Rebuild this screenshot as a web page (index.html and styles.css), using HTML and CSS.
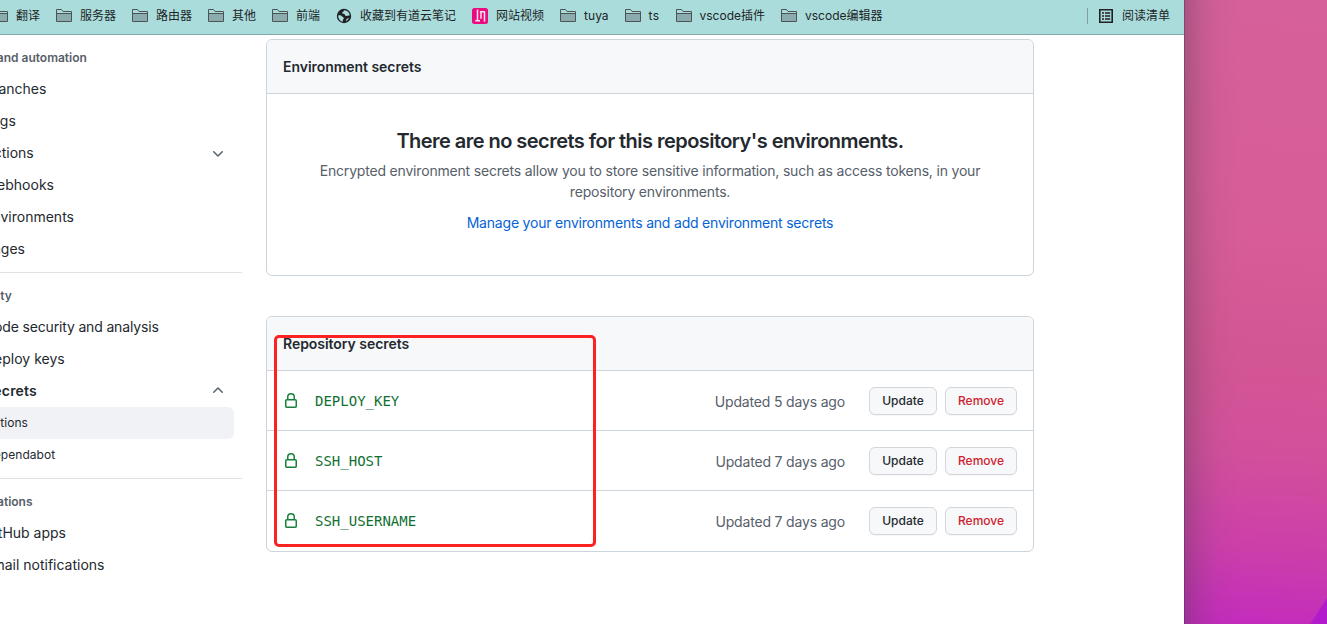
FILE: index.html
```html
<!DOCTYPE html>
<html lang="en">
<head>
<meta charset="utf-8">
<title>Actions secrets</title>
<link rel="stylesheet" href="styles.css">
</head>
<body>
<svg class="defs" width="0" height="0" aria-hidden="true">
  <symbol id="folder" viewBox="0 0 16 16">
    <path d="M.5 13.5v-12h5l1.5 2h8.500v10z" fill="#abdcdc"/>
    <path d="M1 5.500h14v8H1z" fill="#8aacae"/>
    <path d="M.5 13.500v-12h5l1.500 2h8.500v10zM.5 5.500h15" fill="none" stroke="#4d5253"/>
  </symbol>
  <symbol id="lock" viewBox="0 0 16 16">
    <path fill="currentColor" fill-rule="evenodd" d="M4 4v2h-.25A1.75 1.75 0 002 7.75v5.5c0 .966.784 1.75 1.75 1.75h8.5A1.75 1.75 0 0014 13.25v-5.5A1.75 1.75 0 0012.25 6H12V4a4 4 0 10-8 0zm6.500 2V4a2.500 2.500 0 10-5 0v2h5zM12 7.500h.25a.25.25 0 01.25.25v5.500a.25.25 0 01-.25.25h-8.500a.25.25 0 01-.25-.25v-5.500a.25.25 0 01.25-.25H12z"/>
  </symbol>
  <symbol id="chevron" viewBox="0 0 16 16">
    <path fill="currentColor" fill-rule="evenodd" d="M12.78 6.22a.75.75 0 010 1.06l-4.25 4.25a.75.75 0 01-1.06 0L3.22 7.28a.75.75 0 011.06-1.06L8 9.94l3.720-3.720a.75.75 0 011.060 0z"/>
  </symbol>
</svg>
<div class="desktop">
  <div class="window">
    <nav class="bookmarks">
      <div class="bookmark"><svg><use href="#folder"/></svg><span>翻译</span></div>
      <div class="bookmark"><svg><use href="#folder"/></svg><span>服务器</span></div>
      <div class="bookmark"><svg><use href="#folder"/></svg><span>路由器</span></div>
      <div class="bookmark"><svg><use href="#folder"/></svg><span>其他</span></div>
      <div class="bookmark"><svg><use href="#folder"/></svg><span>前端</span></div>
      <div class="bookmark">
        <svg viewBox="0 0 16 16"><circle cx="8" cy="8" r="7.2" fill="#202124"/><path d="M2.3 7.4c1.8-.2 3.2.2 3.9 1.2.5.9 1.7.8 1.7 1.6 0 .9-1.2.9-1.1 2l.2 1.3C4.2 13.2 2 10.700 2.300 7.400zM8.200 2.300c-.8.600-.2 1.100-1.200 1.700-.9.400-1 .9-.6 1.500.6.700 1.600.1 2.200.8.6.600.4 1.500 1.400 1.700 1.300.1 1.900-.6 3.700-.3-.1-3-2.300-5.300-5.500-5.400zM12.900 10.100c-.6 1.500-1.600 2.600-2.900 3.100.1-1.300.3-2.600 2.900-3.100z" fill="#abdcdc"/></svg>
        <span>收藏到有道云笔记</span>
      </div>
      <div class="bookmark">
        <svg viewBox="0 0 16 16"><rect width="16" height="16" rx="2.500" fill="#ea0b7e"/><path d="M5.500 1.500v11M3.300 12.800h4.700M7.800 3.800h5.200M9 3.800v7M12.500 3.800v10" fill="none" stroke="#fde4f0" stroke-width="1.500"/></svg>
        <span>网站视频</span>
      </div>
      <div class="bookmark"><svg><use href="#folder"/></svg><span>tuya</span></div>
      <div class="bookmark"><svg><use href="#folder"/></svg><span class="wide">ts</span></div>
      <div class="bookmark"><svg><use href="#folder"/></svg><span>vscode插件</span></div>
      <div class="bookmark"><svg><use href="#folder"/></svg><span>vscode编辑器</span></div>
      <div class="bookmark reading-list">
        <svg viewBox="0 0 16 16"><path d="M1.800 1.800h12.400v12.400H1.800z" fill="none" stroke="#202124" stroke-width="1.600"/><path d="M4 5h2M7 5h5.200M4 8h2M7 8h5.200M4 11h2M7 11h5.200" stroke="#202124" stroke-width="1.500"/></svg>
        <span>阅读清单</span>
      </div>
    </nav>
    <div class="page">
      <aside class="sidebar">
        <h2 class="group first">Code and automation</h2>
        <a class="item">Branches</a>
        <a class="item">Tags</a>
        <a class="item">Actions<svg class="chevron"><use href="#chevron"/></svg></a>
        <a class="item">Webhooks</a>
        <a class="item">Environments</a>
        <a class="item">Pages</a>
        <hr>
        <h2 class="group">Security</h2>
        <a class="item tight">Code security and analysis</a>
        <a class="item">Deploy keys</a>
        <a class="item open">Secrets<svg class="chevron up"><use href="#chevron"/></svg></a>
        <a class="item sub selected">Actions</a>
        <a class="item sub">Dependabot</a>
        <hr>
        <h2 class="group">Integrations</h2>
        <a class="item">GitHub apps</a>
        <a class="item">Email notifications</a>
      </aside>
      <main class="content">
        <section class="box">
          <h3 class="box-header">Environment secrets</h3>
          <div class="blank">
            <h4>There are no secrets for this repository's environments.</h4>
            <p>Encrypted environment secrets allow you to store sensitive information, such as access tokens, in your<br>repository environments.</p>
            <a class="manage">Manage your environments and add environment secrets</a>
          </div>
        </section>
        <section class="box">
          <h3 class="box-header">Repository secrets</h3>
          <div class="row"><svg class="lock"><use href="#lock"/></svg><code>DEPLOY_KEY</code><span class="updated">Updated 5 days ago</span><button class="btn">Update</button><button class="btn danger">Remove</button></div>
          <div class="row"><svg class="lock"><use href="#lock"/></svg><code>SSH_HOST</code><span class="updated">Updated 7 days ago</span><button class="btn">Update</button><button class="btn danger">Remove</button></div>
          <div class="row"><svg class="lock"><use href="#lock"/></svg><code>SSH_USERNAME</code><span class="updated">Updated 7 days ago</span><button class="btn">Update</button><button class="btn danger">Remove</button></div>
          <div class="highlight"></div>
        </section>
      </main>
    </div>
  </div>
  <div class="wallpaper"></div>
</div>
</body>
</html>
```

FILE: styles.css
```css
* { box-sizing: border-box; }
body {
  margin: 0;
  overflow: hidden;
  font: 14px/21px Inter, "Noto Sans CJK SC", sans-serif;
  color: #24292f;
}
h2, h3, h4, p { margin: 0; }
.defs { position: absolute; }
.desktop { display: flex; width: 1327px; height: 624px; overflow: hidden; }
.window { width: 1184px; background: #fff; overflow: hidden; }

.bookmarks {
  display: flex;
  align-items: center;
  gap: 16px;
  height: 35px;
  padding: 0 14px 3px 0;
  background: #abdcdc;
  border-bottom: 1px solid #82a8aa;
  font-size: 12px;
  line-height: 18px;
  color: #1d2526;
  white-space: nowrap;
}
.bookmark { display: flex; align-items: center; gap: 8px; }
.bookmark:first-child { margin-left: -8px; }
.bookmark svg { width: 16px; height: 16px; flex: none; }
.bookmark .wide { letter-spacing: .4px; }
.reading-list {
  margin-left: auto;
  padding-left: 10px;
  height: 16px;
  border-left: 1px solid #82a0a1;
}

.page { display: flex; gap: 24px; height: 589px; }
.sidebar { width: 242px; padding-top: 6px; }
.group {
  height: 31px;
  margin-left: -37px;
  font-size: 12px;
  line-height: 31px;
  font-weight: 600;
  color: #57606a;
  white-space: nowrap;
}
.group.first { height: 32px; line-height: 33px; }
.item {
  display: flex;
  align-items: center;
  justify-content: space-between;
  height: 32px;
  width: 250px;
  margin-left: -16px;
  padding: 0 8px 2px 0;
  white-space: nowrap;
}
.item.tight { letter-spacing: -.16px; }
.item.open { font-weight: 600; letter-spacing: .2px; }
.item.sub { padding-left: 1px; font-size: 12px; letter-spacing: .06px; }
.item.selected { background: #f0f2f6; border-radius: 6px; }
.chevron { width: 16px; height: 16px; margin-top: 2px; color: #57606a; }
.chevron.up { transform: rotate(180deg); }
.sidebar hr { height: 1px; margin: 7px 0; border: 0; background: #dfe3e7; }

.content { width: 768px; padding-top: 4px; }
.box {
  position: relative;
  border: 1px solid #ccd4dc;
  border-radius: 6px;
  margin-bottom: 40px;
}
.box-header {
  height: 54px;
  padding: 0 16px;
  font-size: 14px;
  line-height: 54px;
  font-weight: 600;
  letter-spacing: -.04px;
  background: #f6f8fa;
  border-bottom: 1px solid #ccd4dc;
  border-radius: 5px 5px 0 0;
}
.blank { height: 181px; padding-top: 32px; text-align: center; color: #57606a; }
.blank h4 { font-size: 20px; line-height: 30px; font-weight: 600; letter-spacing: -.54px; color: #24292f; }
.blank p { margin-top: 4px; letter-spacing: -.185px; white-space: nowrap; }
.manage { display: block; margin-top: 10px; letter-spacing: -.2px; color: #0563d6; }
.row {
  display: flex;
  align-items: center;
  height: 60px;
  padding: 0 16px;
  border-bottom: 1px solid #ccd4dc;
}
.row:nth-child(4) { border-bottom: 0; }
.lock { width: 16px; height: 16px; color: #16803c; }
.row code { margin-left: 16px; padding-top: 1px; font: 14px/21px "DejaVu Sans Mono", monospace; color: #116f33; }
.updated { margin-left: auto; margin-right: 24px; padding-top: 1px; letter-spacing: -.17px; color: #57606a; }
.btn {
  height: 28px;
  width: 68px;
  padding: 0;
  font: 500 12px/20px Inter, sans-serif;
  color: #24292f;
  background: #f6f8fa;
  border: 1px solid #d3d7db;
  border-radius: 6px;
  box-shadow: 0 1px 0 rgba(27, 31, 36, .04);
}
.btn.danger { width: 72px; margin-left: 8px; color: #cf222e; }
.highlight {
  position: absolute;
  left: 7px;
  top: 18px;
  width: 322px;
  height: 212px;
  border: 3px solid #fd2222;
  border-radius: 5px;
}
.wallpaper {
  flex: 1;
  background:
    linear-gradient(90deg, rgba(50, 45, 65, .5) 0, rgba(50, 45, 65, .5) 1px, rgba(80, 60, 80, .32) 1px, rgba(80, 60, 80, .14) 17px, rgba(80, 60, 80, .04) 34px, transparent 55px),
    linear-gradient(123deg, transparent 0, transparent calc(100% - 15px), #b01bcb calc(100% - 13px)),
    linear-gradient(184deg, #d6609a 0, #d75c97 38%, #d35694 56%, #d2509b 72%, #cc3fa9 87%, #c32bbd 100%);
}
```
